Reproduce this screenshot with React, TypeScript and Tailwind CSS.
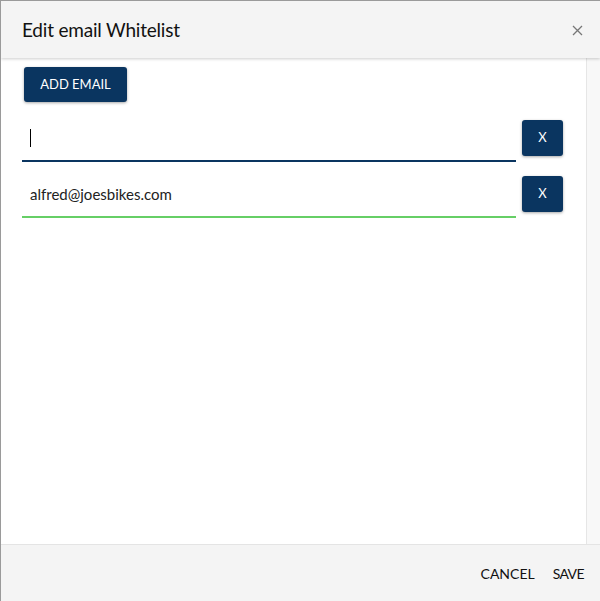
import { useState } from "react"

const font = { fontFamily: '"Lato", "Open Sans", sans-serif' }

function EmailRow({ value, valid, focused }: { value: string; valid?: boolean; focused?: boolean }) {
  return (
    <div className="flex items-start gap-[6px]">
      <div
        className={`flex h-[42px] w-[494px] items-center border-b-2 pb-[4px] pl-2 text-[15px] text-[#222] ${
          valid ? "border-[#66cf66]" : "border-[#0a3560]"
        }`}
      >
        {focused && <span className="h-[18px] w-px bg-black" />}
        {value}
      </div>
      <button className="flex h-[36px] w-[41px] items-center justify-center rounded-[3px] bg-[#0a3560] text-[13px] text-white shadow-[0_1px_3px_rgba(0,0,0,0.35)]">
        X
      </button>
    </div>
  )
}

export default function App() {
  const [emails] = useState([
    { value: "", valid: false, focused: true },
    { value: "alfred@joesbikes.com", valid: true, focused: false },
  ])

  return (
    <div style={font} className="flex h-[601px] w-[600px] flex-col overflow-hidden border-l border-t border-[#9a9a9a] bg-white">
      {/* header */}
      <div className="relative z-10 flex h-[57px] shrink-0 items-center justify-between bg-[#f4f4f4] pl-[21px] pr-[17px] shadow-[0_1px_3px_rgba(0,0,0,0.2)]">
        <h2 className="mt-[2px] text-[19px] tracking-[-0.2px] text-[#111]">Edit email Whitelist</h2>
        <svg width="11" height="11" viewBox="0 0 11 11" className="mt-[1px]">
          <path d="M1 1L10 10M10 1L1 10" stroke="#777" strokeWidth="1.3" />
        </svg>
      </div>

      {/* body */}
      <div className="flex min-h-0 flex-1">
        <div className="flex flex-1 flex-col pl-[21px] pt-[9px]">
          <button className="ml-[2px] h-[35px] w-[103px] rounded-[3px] bg-[#0a3560] text-[13px] text-white shadow-[0_1px_3px_rgba(0,0,0,0.35)]">
            ADD EMAIL
          </button>
          <div className="mt-[18px] flex flex-col gap-[14px]">
            {emails.map((e, i) => (
              <EmailRow key={i} value={e.value} valid={e.valid} focused={e.focused} />
            ))}
          </div>
        </div>
        <div className="w-[14px] border-l border-[#e6e6e6] bg-[#f8f8f8]" />
      </div>

      {/* footer */}
      <div className="flex h-[57px] shrink-0 items-center justify-end gap-[18px] border-t border-[#e4e4e4] bg-[#f4f4f4] pr-[16px] text-[14px] text-[#111]">
        <button>CANCEL</button>
        <button className="tracking-[-0.6px]">SAVE</button>
      </div>
    </div>
  )
}
